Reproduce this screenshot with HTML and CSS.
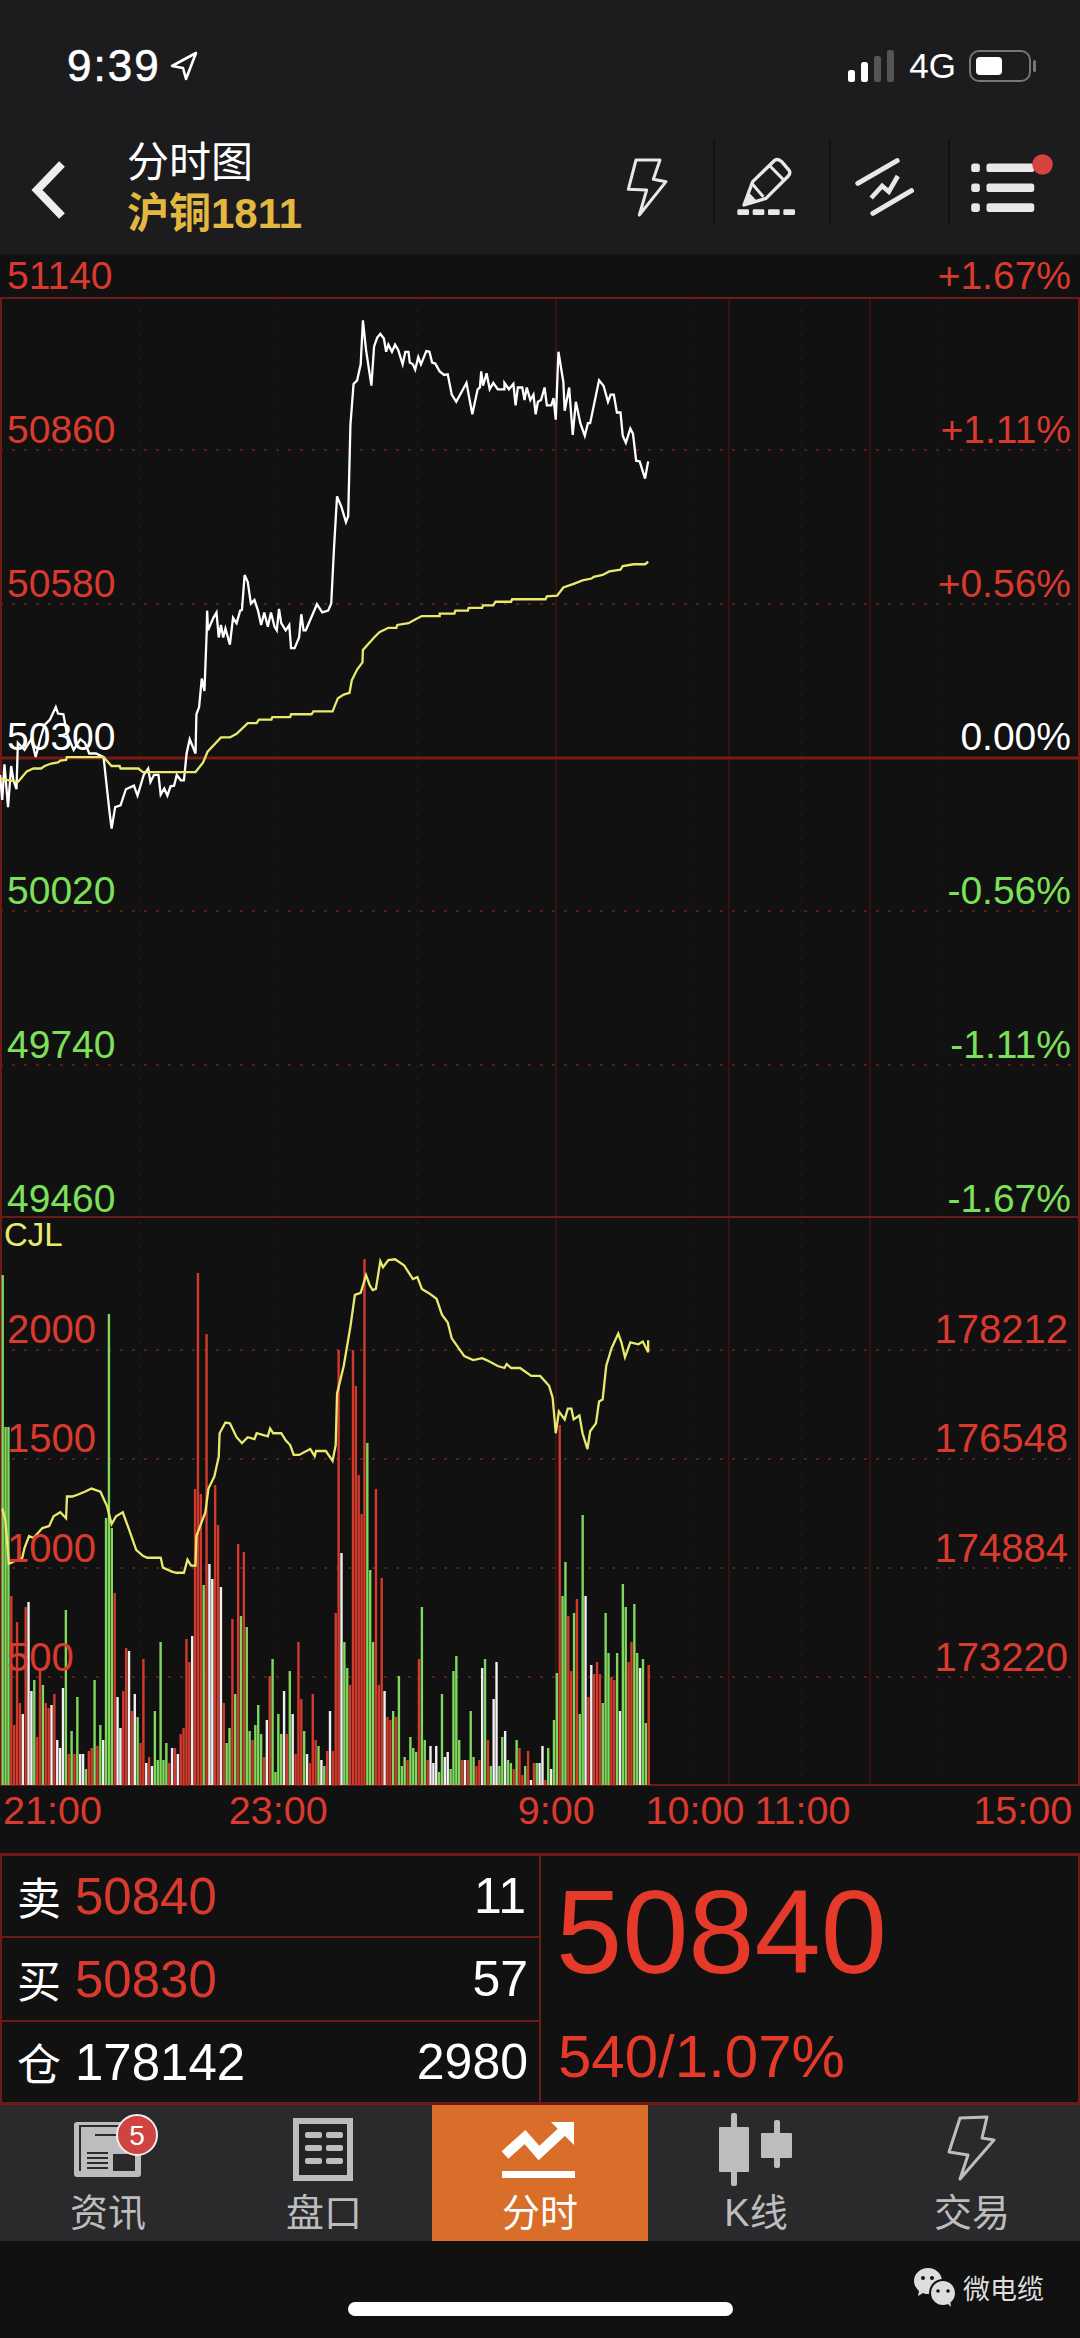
FILE: index.html
```html
<!DOCTYPE html>
<html lang="zh-CN">
<head>
    <meta charset="UTF-8">
    <meta name="viewport" content="width=device-width, initial-scale=1.0">
    <title>分时图</title>
    <link rel="stylesheet" href="styles.css">
</head>
<body>
    <header class="header">
        <div class="status-bar">
            <span class="clock">9:39</span>
            <svg class="location-icon" width="30" height="30" viewBox="0 0 30 30">
                <path d="M27 2 L3 15 L14 17 L17 28 Z" fill="none" stroke="#fff" stroke-width="2.6" stroke-linejoin="round"/>
            </svg>
            <div class="status-right">
                <svg width="50" height="32" viewBox="0 0 50 32">
                    <rect x="1" y="20" width="7" height="12" rx="2.5" fill="#fff"/>
                    <rect x="14" y="12" width="7" height="20" rx="2.5" fill="#fff"/>
                    <rect x="27" y="6" width="7" height="26" rx="2.5" fill="#555"/>
                    <rect x="40" y="0" width="7" height="32" rx="2.5" fill="#555"/>
                </svg>
                <span class="network">4G</span>
                <div class="battery"><div class="battery-fill"></div></div>
                <div class="battery-cap"></div>
            </div>
        </div>
        <div class="nav-bar">
            <svg class="back-icon" width="127" height="70" viewBox="0 0 127 70">
                <polyline points="62,9 37,35 62,61" fill="none" stroke="#eee" stroke-width="8"/>
            </svg>
            <div class="title-block">
                <div class="title">分时图</div>
                <div class="subtitle">沪铜1811</div>
            </div>
            <div class="nav-actions">
                <svg class="nav-btn" width="115" height="110" viewBox="0 0 345 330">
                    <path d="M108 60 L180 60 L160 118 L198 125 L118 225 L140 150 L85 148 Z" fill="none" stroke="#e8e8e8" stroke-width="9" stroke-linejoin="round"/>
                </svg>
                <svg class="nav-btn" width="116" height="110" viewBox="345 0 348 330">
                    <path d="M432 195 L458 125 L525 60 Q535 55 545 65 L568 92 Q572 100 565 108 L498 175 Z" fill="none" stroke="#e8e8e8" stroke-width="10" stroke-linejoin="round"/>
                    <path d="M510 78 L553 122 M455 130 L490 170" stroke="#e8e8e8" stroke-width="9"/>
                    <path d="M432 195 L445 155 L470 182 Z" fill="#e8e8e8"/>
                    <rect x="412" y="208" width="35" height="17" rx="4" fill="#e8e8e8"/>
                    <rect x="458" y="208" width="35" height="17" rx="4" fill="#e8e8e8"/>
                    <rect x="504" y="208" width="35" height="17" rx="4" fill="#e8e8e8"/>
                    <rect x="550" y="208" width="35" height="17" rx="4" fill="#e8e8e8"/>
                </svg>
                <svg class="nav-btn" width="119" height="110" viewBox="692 0 356 330">
                    <path d="M772 130 L890 62 M817 220 L933 152" stroke="#e8e8e8" stroke-width="15" stroke-linecap="round"/>
                    <polyline points="812,174 845,138 865,155 892,108" fill="none" stroke="#e8e8e8" stroke-width="14"/>
                </svg>
                <svg width="130" height="110" viewBox="1048 0 392 330">
                    <rect x="1112" y="70" width="26" height="26" rx="8" fill="#e8e8e8"/>
                    <rect x="1112" y="130" width="26" height="26" rx="8" fill="#e8e8e8"/>
                    <rect x="1112" y="190" width="26" height="26" rx="8" fill="#e8e8e8"/>
                    <rect x="1158" y="70" width="144" height="26" rx="8" fill="#e8e8e8"/>
                    <rect x="1158" y="130" width="144" height="26" rx="8" fill="#e8e8e8"/>
                    <rect x="1158" y="190" width="144" height="26" rx="8" fill="#e8e8e8"/>
                    <circle cx="1327" cy="73" r="31" fill="#d5443f"/>
                </svg>
            </div>
        </div>
    </header>

    <section class="chart-area">
        <svg class="chart-canvas" width="1080" height="1532" viewBox="0 254 1080 1532">
            <!-- grid -->
            <g class="grid-dotted">
                <path d="M0 450 H1080 M0 604 H1080 M0 911 H1080 M0 1065 H1080"/>
                <path d="M0 1350 H1080 M0 1459 H1080 M0 1568 H1080 M0 1677 H1080"/>
            </g>
            <path class="grid-faint" d="M140 297 V1785 M278 297 V1785 M417 297 V1785 M694 297 V1785 M801 297 V1785 M939 297 V1785"/>
            <path class="grid-solid" d="M556 297 V1785 M729 297 V1785 M870 297 V1785"/>
            <path class="grid-frame" d="M1 297 V1785 M1079 297 V1785 M0 298 H1080 M0 1217 H1080 M0 1785 H1080"/>
            <path class="grid-zero" d="M0 758 H1080"/>

            <g id="volumeBars"></g>

            <!-- price and average, traced from the reference -->
            <g transform="translate(0 300) scale(.4464 .3571)">
                <polyline class="line-price" points="0,1330 5,1400 10,1300 18,1420 25,1305 30,1345 37,1370 40,1240 55,1260 70,1230 80,1280 90,1230 100,1190 112,1175 125,1140 130,1158 142,1160 150,1215 165,1260 180,1230 190,1240 200,1270 215,1270 232,1280 245,1430 250,1480 258,1420 270,1415 282,1370 300,1360 308,1388 322,1330 332,1312 337,1350 345,1330 355,1330 360,1385 368,1368 375,1388 382,1362 390,1360 396,1330 405,1345 412,1345 418,1270 425,1230 438,1270 440,1160 446,1140 452,1060 458,1095 463,930 464,870 466,925 478,890 485,875 490,945 495,910 500,945 505,920 515,965 522,890 530,905 538,870 542,868 548,770 555,790 562,850 570,840 578,870 585,910 592,875 600,915 607,875 615,915 620,925 625,865 630,905 640,925 648,910 652,975 660,975 670,945 675,880 680,925 685,925 710,852 722,875 735,870 742,850 748,700 755,550 765,580 775,622 780,605 785,350 792,235 800,225 808,180 813,57 820,140 832,240 838,130 845,105 852,95 860,108 865,145 870,125 878,145 885,125 892,140 902,180 908,145 915,145 918,175 925,180 930,195 937,160 943,180 948,165 955,143 962,145 968,175 975,178 985,200 995,210 1003,208 1012,265 1022,285 1045,232 1058,320 1070,250 1075,245 1078,200 1082,240 1090,205 1097,250 1105,232 1115,250 1130,250 1130,232 1140,250 1150,235 1155,295 1160,245 1170,245 1175,280 1180,245 1188,280 1195,265 1200,320 1205,285 1212,280 1220,245 1225,295 1235,295 1240,275 1245,335 1251,145 1262,230 1265,310 1275,245 1283,378 1290,285 1300,345 1310,380 1317,345 1322,345 1342,225 1352,240 1362,285 1368,265 1375,265 1382,315 1390,315 1395,380 1402,400 1412,360 1418,375 1425,450 1433,452 1445,500 1452,452"/>
                <polyline class="line-average" points="0,1340 40,1350 50,1335 60,1320 75,1312 92,1312 100,1305 115,1298 130,1295 135,1290 148,1288 150,1280 232,1280 250,1305 268,1305 270,1312 310,1312 320,1322 438,1322 455,1295 465,1265 495,1225 515,1225 530,1215 555,1185 575,1185 580,1175 608,1175 610,1168 650,1168 652,1160 698,1160 702,1152 745,1152 757,1115 770,1105 783,1100 788,1065 800,1035 812,1015 813,980 838,945 850,930 870,918 888,918 890,910 915,905 930,895 945,885 985,885 985,878 1018,878 1020,870 1048,870 1050,862 1080,862 1082,855 1105,855 1110,845 1145,845 1147,838 1222,838 1225,830 1248,828 1262,805 1285,795 1305,785 1325,780 1330,775 1350,770 1365,760 1390,755 1395,745 1420,740 1445,740 1452,733"/>
            </g>
            <g transform="translate(0 1200) scale(.4464 .3953)">
                <polyline class="line-average" points="5,780 12,810 20,920 30,915 40,910 50,905 55,880 65,850 75,855 95,830 110,825 120,800 135,790 148,805 150,750 162,750 175,745 190,738 205,730 225,738 240,775 250,820 260,800 275,790 288,830 305,885 320,900 330,905 360,905 365,930 385,940 395,943 412,943 420,910 428,925 438,925 440,850 460,790 467,730 480,700 490,650 492,590 505,563 515,565 530,600 542,615 555,600 570,605 575,590 600,598 605,578 612,590 630,590 640,608 650,620 658,645 670,645 695,630 705,648 708,635 730,635 745,660 752,620 755,490 770,420 785,320 795,240 808,235 820,190 828,215 835,228 842,225 852,155 858,170 870,152 885,150 905,165 925,200 935,195 945,225 960,235 978,250 990,290 1003,310 1012,350 1040,395 1060,405 1080,400 1090,405 1115,420 1130,425 1135,415 1145,425 1165,425 1190,445 1210,445 1230,470 1238,500 1245,590 1252,535 1265,555 1272,528 1280,528 1285,555 1298,545 1305,590 1316,630 1322,585 1335,565 1342,510 1350,505 1358,420 1370,375 1385,338 1392,360 1400,398 1412,360 1430,365 1440,358 1452,385 1452,355"/>
            </g>
        </svg>

        <div class="price-axis">
            <div class="axis-row red"><span>51140</span><span>+1.67%</span></div>
            <div class="axis-row red"><span>50860</span><span>+1.11%</span></div>
            <div class="axis-row red"><span>50580</span><span>+0.56%</span></div>
            <div class="axis-row white"><span>50300</span><span>0.00%</span></div>
            <div class="axis-row green"><span>50020</span><span>-0.56%</span></div>
            <div class="axis-row green"><span>49740</span><span>-1.11%</span></div>
            <div class="axis-row green"><span>49460</span><span>-1.67%</span></div>
        </div>

        <div class="volume-axis">
            <div class="cjl">CJL</div>
            <div class="volume-row red"><span>2000</span><span>178212</span></div>
            <div class="volume-row red"><span>1500</span><span>176548</span></div>
            <div class="volume-row red"><span>1000</span><span>174884</span></div>
            <div class="volume-row red"><span>500</span><span>173220</span></div>
        </div>
    </section>

    <div class="time-axis">
        <span>21:00</span>
        <span>23:00</span>
        <span>9:00</span>
        <span>10:00</span>
        <span>11:00</span>
        <span>15:00</span>
    </div>

    <section class="quote">
        <div class="quote-left">
            <div class="quote-row">
                <span class="quote-label">卖</span>
                <span class="quote-price red">50840</span>
                <span class="quote-qty qty-sell">11</span>
            </div>
            <div class="quote-row">
                <span class="quote-label">买</span>
                <span class="quote-price red">50830</span>
                <span class="quote-qty">57</span>
            </div>
            <div class="quote-row">
                <span class="quote-label">仓</span>
                <span class="quote-price">178142</span>
                <span class="quote-qty">2980</span>
            </div>
        </div>
        <div class="quote-right">
            <div class="last-price">50840</div>
            <div class="change">540/1.07%</div>
        </div>
    </section>

    <nav class="tabs">
        <div class="tab">
            <svg width="216" height="90" viewBox="0 0 216 90">
                <rect x="74" y="17" width="67" height="55" rx="3" fill="#bdbdbd"/>
                <path d="M80 66 V21 H120 M95 30 H120 M87 48 H108 M87 53 H108 M87 58 H108 M87 63 H108" fill="none" stroke="#2a2a2c" stroke-width="2"/>
                <rect x="113" y="49" width="22" height="17" fill="#2a2a2c"/>
                <circle cx="137" cy="30" r="20" fill="#cf4340" stroke="#eee" stroke-width="2"/>
                <text class="badge-text" x="137" y="40" text-anchor="middle">5</text>
            </svg>
            <span class="tab-label">资讯</span>
        </div>
        <div class="tab">
            <svg width="216" height="90" viewBox="0 0 216 90">
                <rect x="80" y="16" width="54" height="57" fill="#232325" stroke="#bdbdbd" stroke-width="6"/>
                <g fill="#bdbdbd">
                    <rect x="89" y="27" width="17" height="6" rx="2"/>
                    <rect x="110" y="27" width="17" height="6" rx="2"/>
                    <rect x="89" y="40" width="17" height="6" rx="2"/>
                    <rect x="110" y="40" width="17" height="6" rx="2"/>
                    <rect x="89" y="53" width="17" height="6" rx="2"/>
                    <rect x="110" y="53" width="17" height="6" rx="2"/>
                </g>
            </svg>
            <span class="tab-label">盘口</span>
        </div>
        <div class="tab tab-active">
            <svg width="216" height="90" viewBox="0 0 216 90">
                <polyline points="73,50 93,32 107,48 134,23" fill="none" stroke="#fff" stroke-width="10"/>
                <path d="M119 17 H142 V40 Z" fill="#fff"/>
                <rect x="70" y="66" width="73" height="7" fill="#fff"/>
            </svg>
            <span class="tab-label">分时</span>
        </div>
        <div class="tab">
            <svg width="216" height="90" viewBox="0 0 216 90">
                <g fill="#bdbdbd">
                    <rect x="71" y="22" width="30" height="45" rx="1"/>
                    <rect x="83" y="8" width="6" height="73" rx="2"/>
                    <rect x="113" y="28" width="31" height="25" rx="1"/>
                    <rect x="126" y="15" width="6" height="48" rx="2"/>
                </g>
            </svg>
            <span class="tab-label">K线</span>
        </div>
        <div class="tab">
            <svg width="216" height="90" viewBox="0 0 216 90">
                <path d="M96 13 L123 12 L118 33 L130 35 L96 74 L104 50 L85 47 Z" fill="none" stroke="#bdbdbd" stroke-width="3" stroke-linejoin="round"/>
            </svg>
            <span class="tab-label">交易</span>
        </div>
    </nav>

    <footer class="footer">
        <div class="home-bar"></div>
        <div class="watermark">
            <svg width="46" height="40" viewBox="0 0 46 40">
                <path d="M15 1 C7 1 1 7 1 14 C1 18 3 21 6 24 L5 29 L10 26 C12 27 13 27 15 27 C23 27 29 21 29 14 C29 7 23 1 15 1 Z" fill="#ddd"/>
                <circle cx="30" cy="26" r="13" fill="#ddd" stroke="#111" stroke-width="2"/>
                <path d="M34 36 L38 40 L37 33 Z" fill="#ddd"/>
                <circle cx="10" cy="11" r="2" fill="#111"/>
                <circle cx="19" cy="11" r="2" fill="#111"/>
                <circle cx="25" cy="24" r="1.8" fill="#111"/>
                <circle cx="35" cy="24" r="1.8" fill="#111"/>
            </svg>
            <span>微电缆</span>
        </div>
    </footer>

    <script src="chart.js"></script>
</body>
</html>
```
FILE: styles.css
```css
* {
    box-sizing: border-box;
}

body {
    width: 1080px;
    height: 2338px;
    margin: 0;
    overflow: hidden;
    background-color: #111;
    font-family: "Liberation Sans", "Noto Sans CJK SC", sans-serif;
    color: #fff;
}

.red {
    color: #d93a2d;
}

.white {
    color: #fff;
}

.green {
    color: #7de05a;
}

/* header */
.header {
    height: 254px;
    background-color: #1c1c1e;
}

.status-bar {
    display: flex;
    align-items: center;
    height: 100px;
    padding: 32px 44px 0 67px;
}

.clock {
    font-size: 44px;
    letter-spacing: 2px;
    -webkit-text-stroke: 0.6px #fff;
}

.location-icon {
    margin-left: 8px;
}

.status-right {
    display: flex;
    align-items: center;
    margin-left: auto;
}

.network {
    margin-left: 12px;
    font-size: 35px;
}

.battery {
    width: 62px;
    height: 32px;
    margin-left: 13px;
    padding: 5px;
    border: 2px solid #777;
    border-radius: 10px;
}

.battery-fill {
    width: 26px;
    height: 100%;
    border-radius: 4px;
    background-color: #fff;
}

.battery-cap {
    width: 3px;
    height: 12px;
    margin-left: 2px;
    border-radius: 2px;
    background-color: #777;
}

.nav-bar {
    display: flex;
    align-items: center;
    height: 154px;
    padding-top: 21px;
}

.back-icon {
    margin-top: 5px;
    flex-shrink: 0;
}

.title {
    font-size: 42px;
    line-height: 51px;
}

.subtitle {
    font-size: 42px;
    line-height: 51px;
    font-weight: bold;
    color: #e3b840;
}

.nav-actions {
    display: flex;
    margin-left: auto;
    margin-top: 15px;
}

/* divider is shorter than the icon box */
.nav-btn {
    background: linear-gradient(#111, #111) right top / 2px 84px no-repeat;
}

/* chart */
.chart-area {
    position: relative;
    height: 1532px;
}

.chart-canvas {
    position: absolute;
    top: 0;
    left: 0;
}

.grid-dotted {
    fill: none;
    stroke: #5c1d18;
    stroke-width: 2;
    stroke-dasharray: 3 9;
}

.grid-faint {
    fill: none;
    stroke: #2c1411;
    stroke-width: 1.5;
    stroke-dasharray: 3 9;
}

.grid-solid {
    fill: none;
    stroke: #43150f;
    stroke-width: 1.5;
}

.grid-frame {
    fill: none;
    stroke: #6e1a16;
    stroke-width: 2;
}

.grid-zero {
    fill: none;
    stroke: #7a1a15;
    stroke-width: 3;
}

.line-price,
.line-average {
    fill: none;
    stroke-width: 2.3;
    vector-effect: non-scaling-stroke;
}

.line-price {
    stroke: #fff;
}

.line-average {
    stroke: #e8ea6e;
}

.price-axis {
    position: absolute;
    top: 0;
    left: 0;
    width: 100%;
}

.axis-row {
    display: flex;
    justify-content: space-between;
    height: 153.75px;
    padding: 0 9px 0 7px;
    font-size: 39px;
    line-height: 44px;
}

.volume-axis {
    position: absolute;
    top: 961px;
    left: 0;
    width: 100%;
}

.cjl {
    height: 92px;
    padding-left: 4px;
    font-size: 33px;
    line-height: 40px;
    color: #e8ea6e;
}

.volume-row {
    display: flex;
    justify-content: space-between;
    height: 109.3px;
    padding: 0 12px 0 7px;
    font-size: 40px;
    line-height: 44px;
}

.time-axis {
    display: flex;
    height: 67px;
    padding-left: 3px;
    font-size: 39.5px;
    line-height: 48px;
    color: #d93a2d;
}

.time-axis span:nth-child(2) {
    margin-left: 127px;
}

.time-axis span:nth-child(3) {
    margin-left: 190px;
}

.time-axis span:nth-child(4) {
    margin-left: 51px;
}

.time-axis span:nth-child(5) {
    margin-left: 10px;
}

.time-axis span:nth-child(6) {
    margin-left: 123px;
}

/* quote box */
.quote {
    display: grid;
    grid-template-columns: 539px 1fr;
    height: 252px;
    border: 2px solid #6e1a16;
    border-top-width: 3px;
    border-bottom-width: 3px;
}

.quote-left {
    display: grid;
    grid-template-rows: 82px 84px 1fr;
    border-right: 2px solid #6e1a16;
}

.quote-row {
    display: flex;
    align-items: center;
    padding: 0 11px 0 15px;
    border-bottom: 2px solid #6e1a16;
}

.quote-row:last-child {
    border-bottom: none;
}

.quote-label {
    width: 58px;
    font-size: 44px;
}

.quote-price {
    font-size: 51px;
}

.quote-qty {
    margin-left: auto;
    font-size: 50px;
}

.qty-sell {
    margin-right: 2px;
}

.quote-right {
    padding-left: 15px;
    color: #e53a2a;
}

.last-price {
    height: 160px;
    padding-top: 6px;
    font-size: 119px;
    line-height: 140px;
}

.change {
    padding-left: 2px;
    font-size: 60px;
    line-height: 66px;
    margin-top: 8px;
}

/* bottom tabs */
.tabs {
    display: grid;
    grid-template-columns: repeat(5, 216px);
    height: 136px;
    background-color: #2a2a2c;
}

.tab {
    display: flex;
    flex-direction: column;
    align-items: center;
    color: #bdbdbd;
}

.tab-active {
    background-color: #d96d2a;
    color: #fff;
}

.tab-label {
    margin-top: -2px;
    font-size: 38px;
    line-height: 40px;
}

.badge-text {
    fill: #fff;
    font-size: 28px;
}

/* footer */
.footer {
    position: relative;
    display: flex;
    justify-content: center;
    height: 97px;
    padding-top: 61px;
}

.home-bar {
    width: 385px;
    height: 14px;
    border-radius: 7px;
    background-color: #fff;
}

.watermark {
    position: absolute;
    top: 26px;
    left: 913px;
    display: flex;
    align-items: center;
    gap: 4px;
    font-size: 27px;
    color: #ddd;
}
```
FILE: chart.js
```js
// Volume bars: colour letter + height in px, left to right
const volumes = `
g510 g358 g358 r189 r60 r163 r82 w71 r178 w183 w94 g105 r48 r115 g100 r82 r77 w80 r91 w45
w37 w97 g175 r31 g54 r31 g88 w31 w31 g16 r34 r37 g105 r39 g60 w45 g267 g471 g257 r192
w88 w57 r94 r137 w134 r74 w91 g68 r42 r126 w22 r28 w19 g74 g25 g143 g25 g42 r22 w37
r37 w31 r51 r57 r146 r123 w149 r296 r512 r291 g200 r451 w221 w206 r300 r260
w198 r82 g42 g57 r166 g91 r241 g169 r233 g158 g54 r45 g60 g80 g51 r28 w65 r109 g126 g13
g71 g51 w94 r51 g114 w71 r31 r143 r86 g54 w31 r22 r91 r45 g39 w25 g19 r34 w74 r34
r172 r435 w232 g143 g117 r100 r435 r399 r310 r271 r526 g342 g215 g143 r296 r100 r207 w94 r68 r65
g74 r68 g109 g19 g28 r25 g48 g37 g33 r126 g178 g45 r25 w39 w22 w39 g13
g91 w28 w33 g16 g114 g129 g45 r25 w25 r25 g74 g28 r19 r25 w117 g126 r45 g19 w86 w123
g19 g48 w54 g25 g22 r16 g45 r37 r10 g19 r34 w5 r22 g22 w22 w39 r5 g37 w16 g65
g112 r360 g189 g223 r169 r114 g172 r186 g71 g270 w189 r88 w120 r111 r123 r111 g82 g172 g132 r108
r105 g132 w74 g201 g178 r123 r143 g181 g132 w117 g126 g62 r120
`.trim().split(/\s+/);

const barColors = { r: "#d23a2c", g: "#7fd85c", w: "#f0f0f0" };
const baseY = 1785;
const firstX = 2.7;
const lastX = 648.7;

function drawVolumeBars() {
    const group = document.getElementById("volumeBars");
    const step = (lastX - firstX) / (volumes.length - 1);

    volumes.forEach((item, index) => {
        const height = parseInt(item.slice(1), 10);
        const bar = document.createElementNS("http://www.w3.org/2000/svg", "rect");
        bar.setAttribute("x", firstX + index * step - 1.2);
        bar.setAttribute("y", baseY - height);
        bar.setAttribute("width", 2.4);
        bar.setAttribute("height", height);
        bar.setAttribute("fill", barColors[item[0]]);
        group.appendChild(bar);
    });
}

drawVolumeBars();
```
